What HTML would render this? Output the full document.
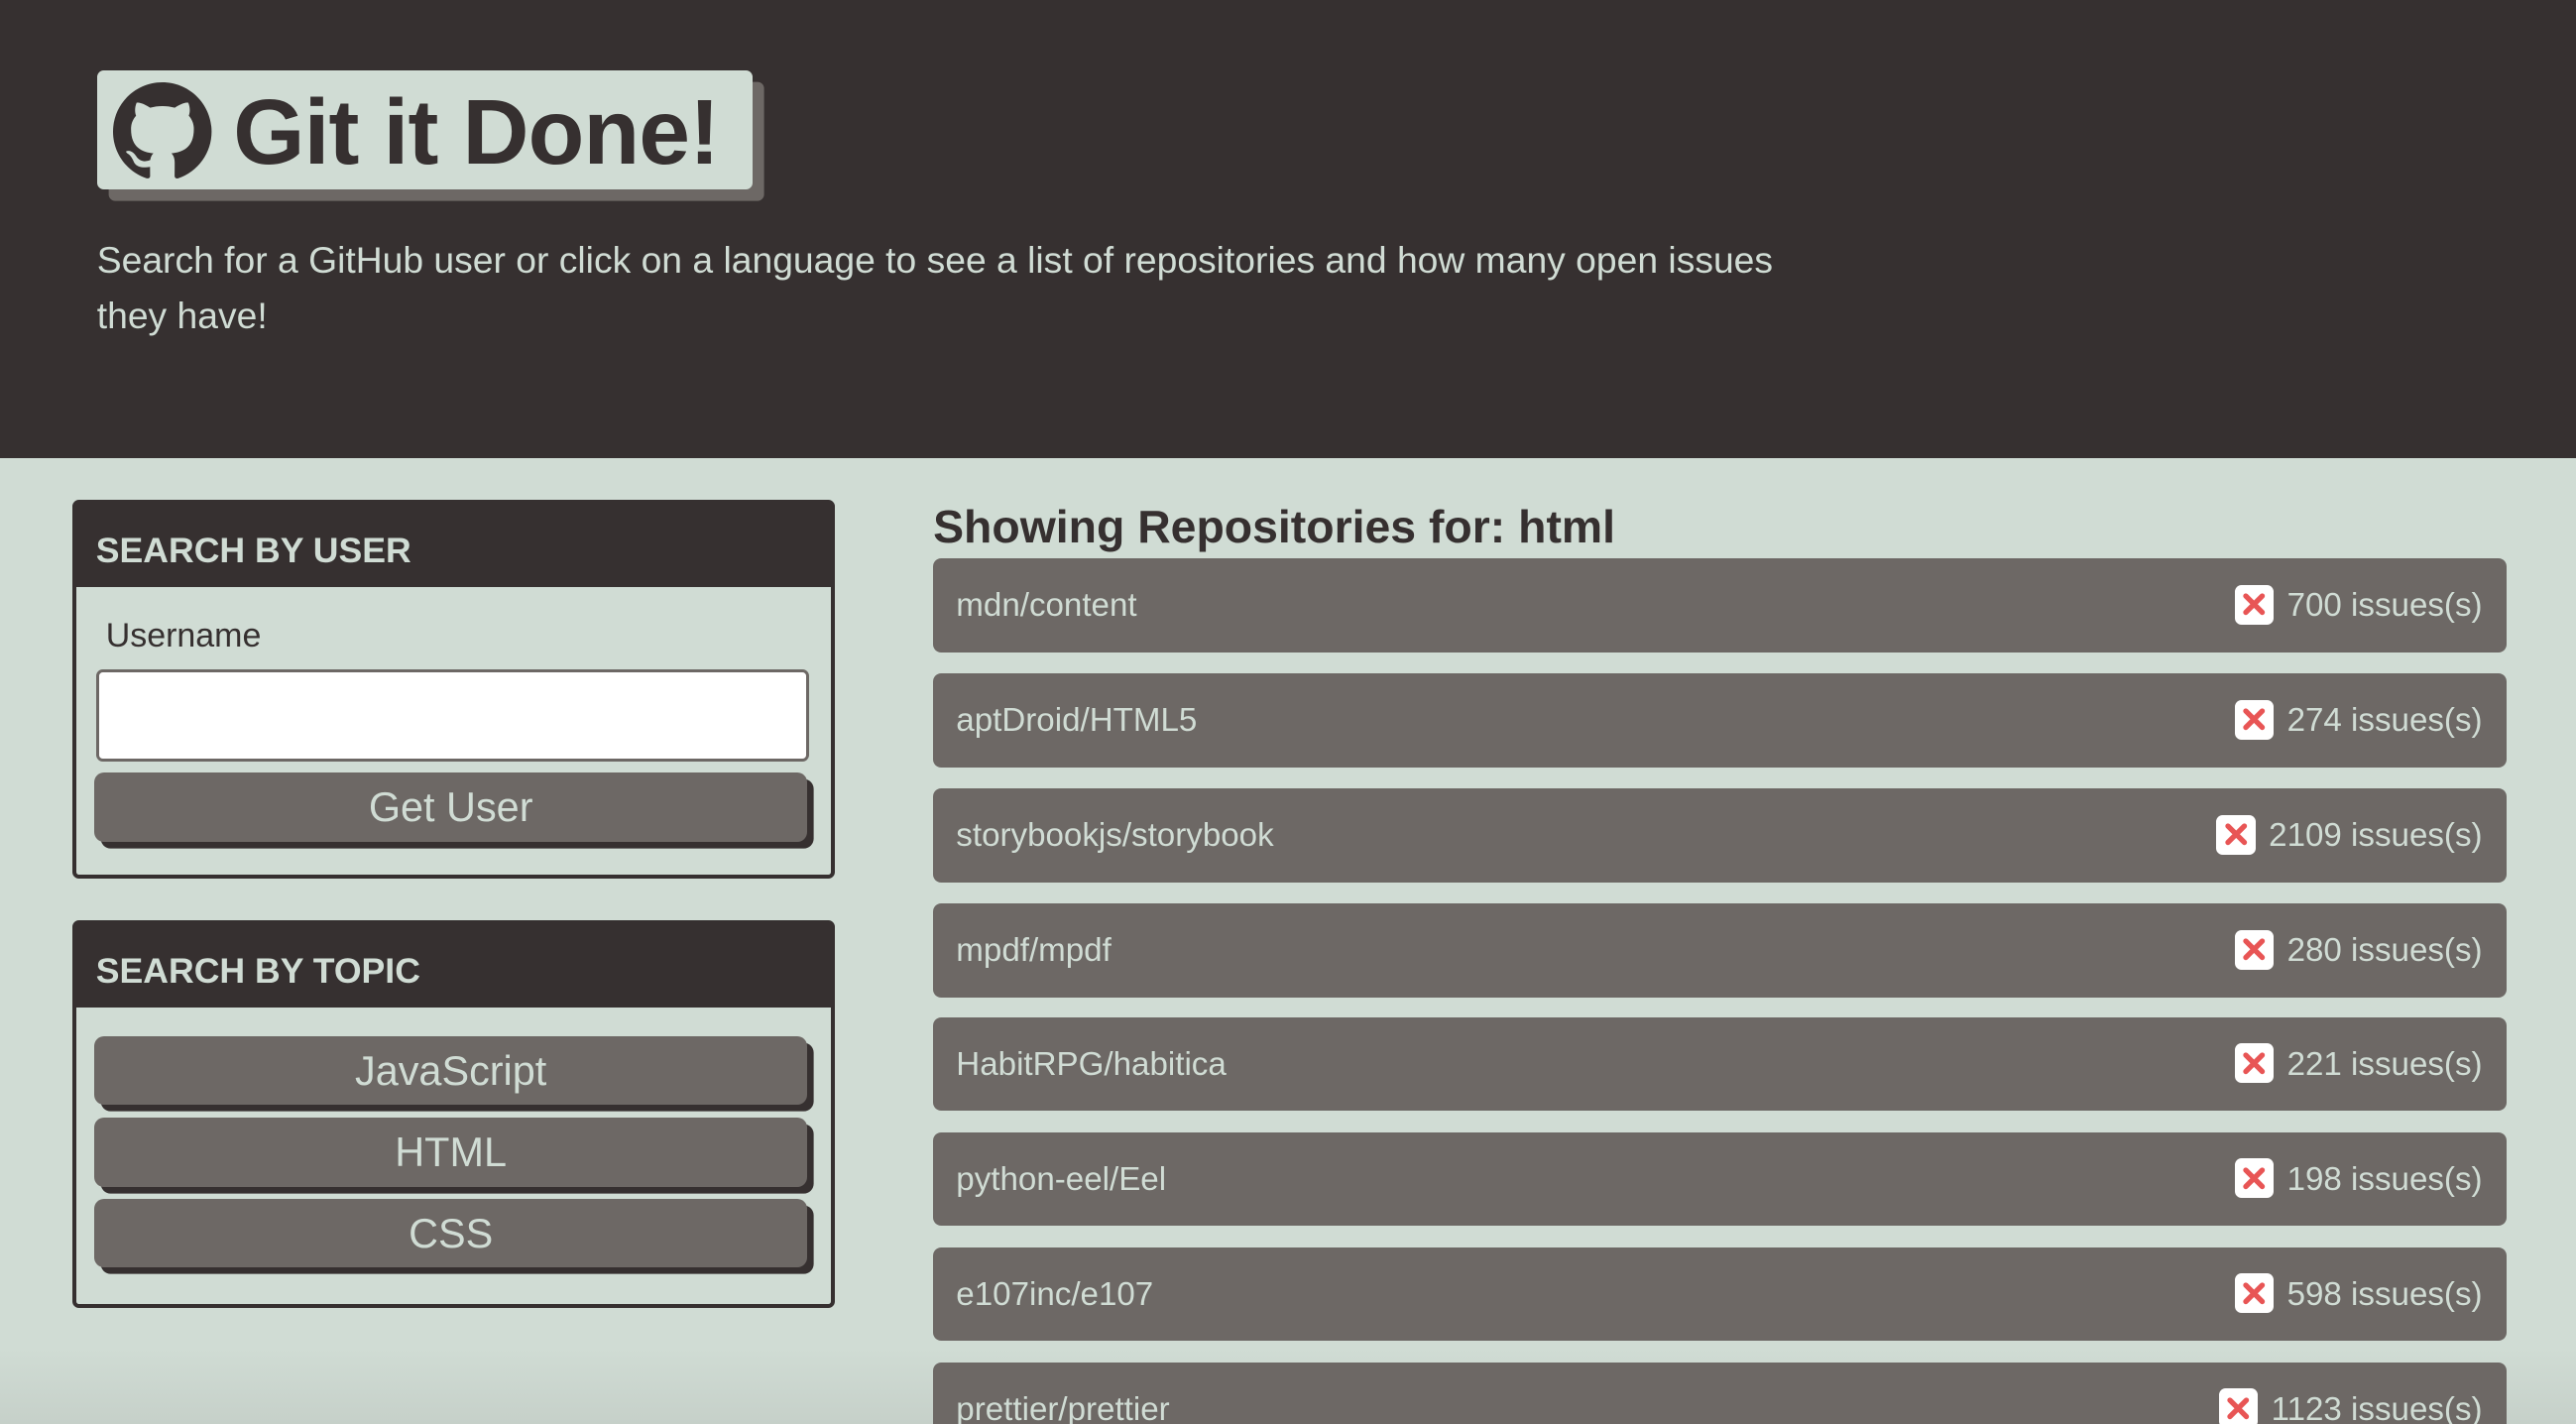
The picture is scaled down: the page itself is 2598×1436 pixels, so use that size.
<!DOCTYPE html>
<html><head><meta charset="utf-8"><style>
html,body{margin:0;padding:0;width:2598px;height:1436px;overflow:hidden;background:#d0dcd4}
#w{zoom:1.65689;width:1568px;height:867px;position:relative;font-family:"Liberation Sans",sans-serif;background:linear-gradient(#d0dcd4 0,#d0dcd4 820px,#c6d0c9 867px)}
.a{position:absolute}
.hdr{left:0;top:0;width:1568px;height:279px;background:#363030}
.logo{left:59px;top:43px;width:399px;height:72px;background:#d0dcd4;border-radius:4px;box-shadow:7px 7px 0 #6d6865}
.logo span{position:absolute;left:83px;top:5px;font-size:56px;font-weight:bold;color:#363030;letter-spacing:-0.5px}
.sub{left:59px;top:141px;width:1065px;font-size:22.5px;line-height:34px;color:#d0dcd4}
.card{left:44px;width:464px;border:3px solid #363030;border-radius:4px;box-sizing:border-box}
.ch{position:absolute;left:0;top:0;right:0;height:51px;background:#363030;color:#d0dcd4;font-weight:bold;font-size:21.5px;line-height:57px;padding-left:12px}
.btn{position:absolute;left:11px;width:434px;height:42px;background:#6d6865;border-radius:6px;box-shadow:4px 4px 0 #363030;color:#d0dcd4;font-size:25px;text-align:center;line-height:43px}
.row{position:absolute;left:568px;width:958px;height:57px;background:#6d6865;border-radius:5px;color:#d0dcd4;font-size:20px;line-height:58px}
.row .n{position:absolute;left:14px}
.row .i{position:absolute;right:15px}
.x{display:inline-block;width:24px;height:24px;background:#fff;border-radius:4px;vertical-align:-5px;margin-right:8px;position:relative}
.x svg{position:absolute;left:4px;top:4px}
</style></head><body><div id="w">
<div class="a hdr"></div>
<div class="a logo">
<svg class="a" style="left:10px;top:7px" width="60" height="60" viewBox="0 0 16 16"><path fill="#363030" d="M8 0C3.580 0 0 3.58 0 8c0 3.54 2.29 6.53 5.47 7.59.4.07.55-.17.55-.38 0-.19-.01-.82-.01-1.49-2.010.37-2.53-.49-2.69-.94-.09-.23-.48-.94-.82-1.13-.28-.15-.68-.52-.01-.53.63-.01 1.08.58 1.23.82.72 1.21 1.87.87 2.33.66.07-.52.28-.87.51-1.07-1.78-.2-3.64-.89-3.64-3.95 0-.87.31-1.59.82-2.15-.08-.2-.36-1.02.08-2.12 0 0 .67-.21 2.2.82.64-.18 1.32-.27 2-.27.68 0 1.36.09 2 .27 1.53-1.04 2.2-.82 2.2-.82.44 1.1.16 1.92.08 2.12.51.56.82 1.27.82 2.15 0 3.07-1.87 3.75-3.65 3.95.29.25.54.73.54 1.48 0 1.07-.01 1.930-.01 2.2 0 .21.15.46.55.38A8.013 8.013 0 0016 8c0-4.42-3.58-8-8-8z"/></svg>
<span>Git it Done!</span></div>
<div class="a sub">Search for a GitHub user or click on a language to see a list of repositories and how many open issues they have!</div>

<div class="a card" style="top:304px;height:231px"><div class="ch">SEARCH BY USER</div>
<div class="a" style="left:18px;top:69px;font-size:20.5px;color:#363030">Username</div>
<div class="a" style="left:12px;top:101px;width:434px;height:56px;box-sizing:border-box;background:#fff;border:2px solid #6d6865;border-radius:4px"></div>
<div class="btn" style="top:164px">Get User</div></div>

<div class="a card" style="top:560px;height:236px"><div class="ch">SEARCH BY TOPIC</div>
<div class="btn" style="top:68px">JavaScript</div>
<div class="btn" style="top:118px">HTML</div>
<div class="btn" style="top:167px">CSS</div></div>

<div class="a" style="left:568px;top:304px;font-size:28px;font-weight:bold;color:#363030">Showing Repositories for: html</div>
<div class="row" style="top:340px"><span class="n">mdn/content</span><span class="i"><span class="x"><svg width="16" height="16"><path d="M3 3L13 13M13 3L3 13" stroke="#e85555" stroke-width="3.2" stroke-linecap="round"/></svg></span>700 issues(s)</span></div>
<div class="row" style="top:410px"><span class="n">aptDroid/HTML5</span><span class="i"><span class="x"><svg width="16" height="16"><path d="M3 3L13 13M13 3L3 13" stroke="#e85555" stroke-width="3.2" stroke-linecap="round"/></svg></span>274 issues(s)</span></div>
<div class="row" style="top:480px"><span class="n">storybookjs/storybook</span><span class="i"><span class="x"><svg width="16" height="16"><path d="M3 3L13 13M13 3L3 13" stroke="#e85555" stroke-width="3.2" stroke-linecap="round"/></svg></span>2109 issues(s)</span></div>
<div class="row" style="top:550px"><span class="n">mpdf/mpdf</span><span class="i"><span class="x"><svg width="16" height="16"><path d="M3 3L13 13M13 3L3 13" stroke="#e85555" stroke-width="3.2" stroke-linecap="round"/></svg></span>280 issues(s)</span></div>
<div class="row" style="top:619px"><span class="n">HabitRPG/habitica</span><span class="i"><span class="x"><svg width="16" height="16"><path d="M3 3L13 13M13 3L3 13" stroke="#e85555" stroke-width="3.2" stroke-linecap="round"/></svg></span>221 issues(s)</span></div>
<div class="row" style="top:689px"><span class="n">python-eel/Eel</span><span class="i"><span class="x"><svg width="16" height="16"><path d="M3 3L13 13M13 3L3 13" stroke="#e85555" stroke-width="3.2" stroke-linecap="round"/></svg></span>198 issues(s)</span></div>
<div class="row" style="top:759px"><span class="n">e107inc/e107</span><span class="i"><span class="x"><svg width="16" height="16"><path d="M3 3L13 13M13 3L3 13" stroke="#e85555" stroke-width="3.2" stroke-linecap="round"/></svg></span>598 issues(s)</span></div>
<div class="row" style="top:829px"><span class="n">prettier/prettier</span><span class="i"><span class="x"><svg width="16" height="16"><path d="M3 3L13 13M13 3L3 13" stroke="#e85555" stroke-width="3.2" stroke-linecap="round"/></svg></span>1123 issues(s)</span></div>
</div></body></html>
